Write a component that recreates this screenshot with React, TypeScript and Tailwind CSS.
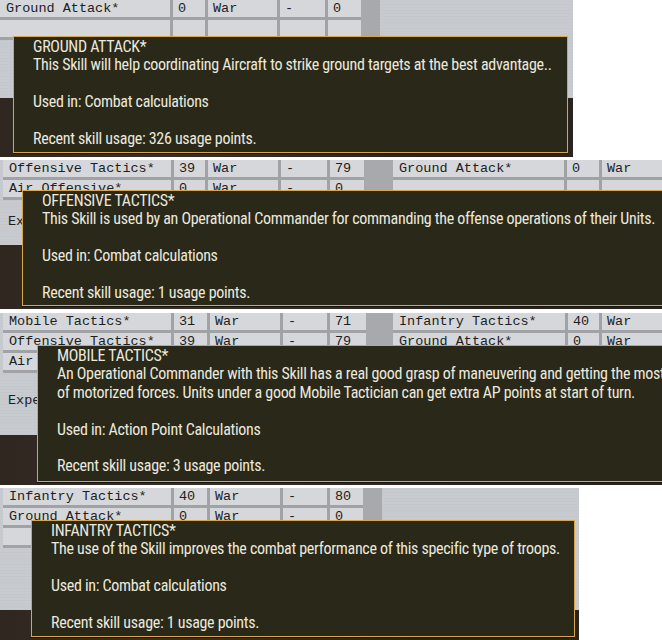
import React from "react";

type Strip = {
  w: string;
  h: string;
  metal: string;
  pad: string;
  left: { widths: string[]; rows: string[][] };
  gray: string;
  right?: { widths: string[]; rows: string[][] };
  label?: string;
  labelGap?: string;
  tip: {
    pos: string;
    title: string;
    lines: string[];
    usedIn: string;
    usage: string;
  };
};

const strips: Strip[] = [
  {
    w: "w-[573px]",
    h: "h-[157px]",
    metal: "h-[98px]",
    pad: "pl-0",
    left: {
      widths: ["w-[170px]", "w-[32px]", "w-[69px]", "w-[45px]", "w-[33px]"],
      rows: [
        ["Ground Attack*", "0", "War", "-", "0"],
        ["", "", "", "", ""],
      ],
    },
    gray: "w-[19px]",
    tip: {
      pos: "left-[13px] top-[36px] w-[555px] h-[117px]",
      title: "GROUND ATTACK*",
      lines: ["This Skill will help coordinating Aircraft to strike ground targets at the best advantage.."],
      usedIn: "Combat calculations",
      usage: "326",
    },
  },
  {
    w: "w-[662px]",
    h: "h-[149px]",
    metal: "h-[85px]",
    pad: "pl-[3px]",
    left: {
      widths: ["w-[168px]", "w-[31px]", "w-[70px]", "w-[46px]", "w-[34px]"],
      rows: [
        ["Offensive Tactics*", "39", "War", "-", "79"],
        ["Air Offensive*", "0", "War", "-", "0"],
      ],
    },
    gray: "w-[49px]",
    right: {
      widths: ["w-[171px]", "w-[32px]", "w-[60px]"],
      rows: [
        ["Ground Attack*", "0", "War"],
        ["", "", ""],
      ],
    },
    label: "Experience",
    labelGap: "mt-[13px]",
    tip: {
      pos: "left-[22px] top-[30px] w-[660px] h-[116px]",
      title: "OFFENSIVE TACTICS*",
      lines: ["This Skill is used by an Operational Commander for commanding the offense operations of their Units."],
      usedIn: "Combat calculations",
      usage: "1",
    },
  },
  {
    w: "w-[662px]",
    h: "h-[172px]",
    metal: "h-[122px]",
    pad: "pl-[3px]",
    left: {
      widths: ["w-[168px]", "w-[33px]", "w-[70px]", "w-[44px]", "w-[36px]"],
      rows: [
        ["Mobile Tactics*", "31", "War", "-", "71"],
        ["Offensive Tactics*", "39", "War", "-", "79"],
        ["Air Offensive*", "0", "War", "-", "0"],
      ],
    },
    gray: "w-[48px]",
    right: {
      widths: ["w-[172px]", "w-[31px]", "w-[60px]"],
      rows: [
        ["Infantry Tactics*", "40", "War"],
        ["Ground Attack*", "0", "War"],
        ["", "", ""],
      ],
    },
    label: "Experience",
    labelGap: "mt-[19px]",
    tip: {
      pos: "left-[37px] top-[32px] w-[640px] h-[137px]",
      title: "MOBILE TACTICS*",
      lines: [
        "An Operational Commander with this Skill has a real good grasp of maneuvering and getting the most out",
        "of motorized forces. Units under a good Mobile Tactician can get extra AP points at start of turn.",
      ],
      usedIn: "Action Point Calculations",
      usage: "3",
    },
  },
  {
    w: "w-[579px]",
    h: "h-[152px]",
    metal: "h-[122px]",
    pad: "pl-[3px]",
    left: {
      widths: ["w-[168px]", "w-[33px]", "w-[70px]", "w-[44px]", "w-[33px]"],
      rows: [
        ["Infantry Tactics*", "40", "War", "-", "80"],
        ["Ground Attack*", "0", "War", "-", "0"],
        ["", "", "", "", ""],
      ],
    },
    gray: "w-[19px]",
    tip: {
      pos: "left-[31px] top-[32px] w-[544px] h-[117px]",
      title: "INFANTRY TACTICS*",
      lines: ["The use of the Skill improves the combat performance of this specific type of troops."],
      usedIn: "Combat calculations",
      usage: "1",
    },
  },
];

const SkillTable = ({ widths, rows }: { widths: string[]; rows: string[][] }) => (
  <div className="flex flex-col gap-[3px] bg-[#a0a2a5] pb-[3px]">
    {rows.map((row, r) => (
      <div key={r} className="flex gap-[3px] h-[17px]">
        {row.map((cell, c) => (
          <div
            key={c}
            className={`${widths[c]} ${c === 0 ? "pl-[6px]" : "pl-[5px]"} bg-[#d5d7da] leading-[17px] whitespace-nowrap overflow-hidden`}
          >
            {cell}
          </div>
        ))}
      </div>
    ))}
  </div>
);

const Tooltip = ({ tip }: { tip: Strip["tip"] }) => (
  <div
    className={`absolute ${tip.pos} border-[1.5px] border-[#d8a54f] bg-[#2a2818] pl-[19px] pt-[1px] text-[#ebe9df] text-[16px] tracking-[-0.3px] leading-[18.4px] font-['Roboto_Condensed','DejaVu_Sans_Condensed',sans-serif] whitespace-nowrap shadow-[0_1px_0_#1a140c]`}
  >
    <div>{tip.title}</div>
    {tip.lines.map((l, i) => (
      <div key={i}>{l}</div>
    ))}
    <div>&nbsp;</div>
    <div>Used in: {tip.usedIn}</div>
    <div>&nbsp;</div>
    <div>Recent skill usage: {tip.usage} usage points.</div>
  </div>
);

const StripView = ({ s }: { s: Strip }) => (
  <div className={`relative overflow-hidden ${s.w} ${s.h} flex flex-col bg-[#2f2821]`}>
    <div
      className={`${s.metal} bg-[#c6c9cd] bg-[repeating-linear-gradient(180deg,#c9ccd0_0px,#c2c5c9_2px,#cdd0d3_3px)] ${s.pad} font-['Liberation_Mono',monospace] text-[13.5px] text-[#1e1e1e]`}
    >
      <div className="flex items-stretch">
        <SkillTable widths={s.left.widths} rows={s.left.rows} />
        <div className={`${s.gray} bg-[#a7a9ac]`} />
        {s.right && <SkillTable widths={s.right.widths} rows={s.right.rows} />}
      </div>
      {s.label && <div className={`${s.labelGap} pl-[5px] leading-[17px]`}>{s.label}</div>}
    </div>
    <div className="flex-1 bg-[#2e2620] bg-[radial-gradient(circle_at_30%_40%,#3a3029_0%,#2b231d_60%)]" />
    <Tooltip tip={s.tip} />
  </div>
);

export default function App() {
  return (
    <div className="w-[662px] h-[640px] bg-white flex flex-col overflow-hidden">
      <StripView s={strips[0]} />
      <div className="h-[3px]" />
      <StripView s={strips[1]} />
      <div className="h-[4px]" />
      <StripView s={strips[2]} />
      <div className="h-[3px]" />
      <StripView s={strips[3]} />
    </div>
  );
}
